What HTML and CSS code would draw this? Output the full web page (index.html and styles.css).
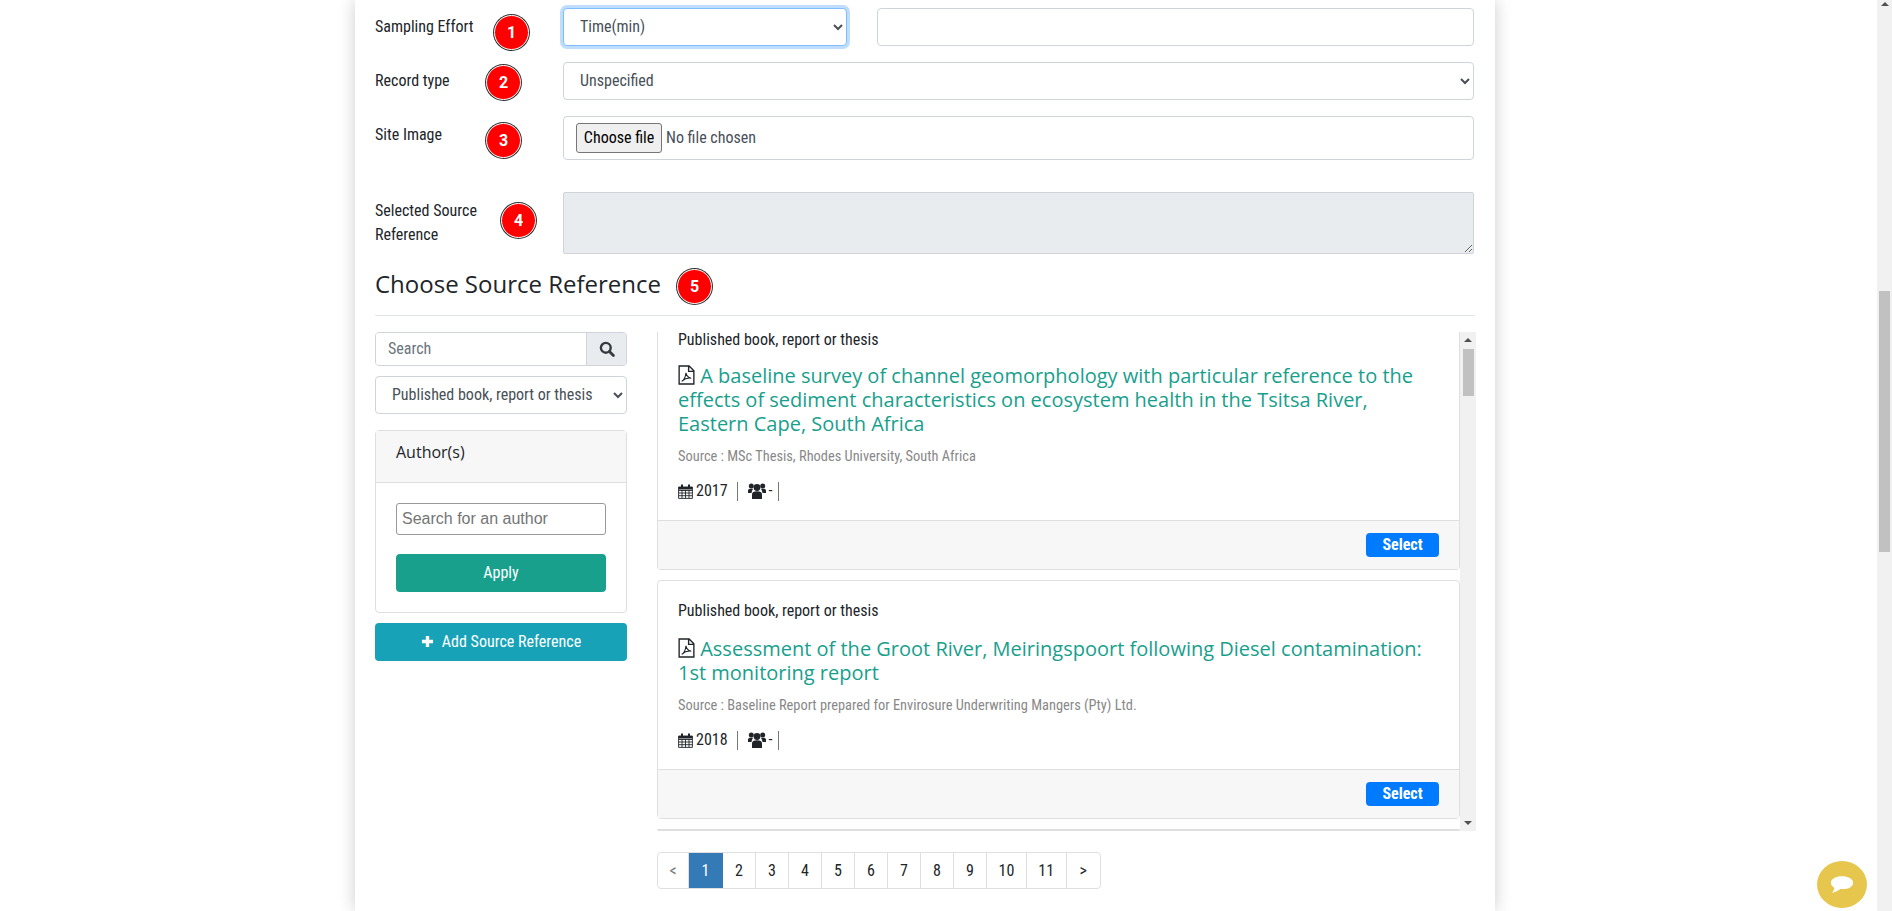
FILE: index.html
```html
<!DOCTYPE html>
<html lang="en">
<head>
  <meta charset="UTF-8">
  <title>Site Visit</title>
  <link rel="stylesheet" href="styles.css">
</head>
<body>
  <div class="page">
    <main class="panel">
      <form class="site-form">
        <div class="form-row">
          <label class="form-label">Sampling Effort</label>
          <div class="two-cols">
            <select class="form-control select-focus"><option>Time(min)</option></select>
            <input class="form-control" type="text">
          </div>
          <span class="badge badge-1">1</span>
        </div>
        <div class="form-row">
          <label class="form-label">Record type</label>
          <select class="form-control"><option>Unspecified</option></select>
          <span class="badge badge-2">2</span>
        </div>
        <div class="form-row row-file">
          <label class="form-label">Site Image</label>
          <div class="form-control file-control">
            <button class="file-btn" type="button">Choose file</button>
            <span>No file chosen</span>
          </div>
          <span class="badge badge-3">3</span>
        </div>
        <div class="form-row">
          <label class="form-label">Selected Source Reference</label>
          <textarea class="form-control source-area" disabled></textarea>
          <span class="badge badge-4">4</span>
        </div>
      </form>

      <div class="section-head">
        <h3>Choose Source Reference</h3>
        <span class="badge badge-5">5</span>
      </div>

      <div class="chooser">
        <aside class="filters">
          <div class="search-group">
            <input type="text" placeholder="Search">
            <button type="button" aria-label="Search">
              <svg viewBox="0 0 16 16" width="16" height="16"><circle cx="6.800" cy="6.800" r="4.900" fill="none" stroke="#343a40" stroke-width="2.400"/><path d="M10.400 10.400 14.400 14.400" stroke="#343a40" stroke-width="2.800" stroke-linecap="round"/></svg>
            </button>
          </div>
          <select class="form-control type-select"><option>Published book, report or thesis</option></select>
          <div class="author-card">
            <div class="author-head">Author(s)</div>
            <div class="author-body">
              <input class="author-input" type="text" placeholder="Search for an author">
              <button class="btn-apply" type="button">Apply</button>
            </div>
          </div>
          <button class="btn-add" type="button">
            <svg viewBox="0 0 14 14" width="13" height="13"><path d="M5.200 1h3.600v4.200H13v3.600H8.800V13H5.200V8.800H1V5.200h4.200z" fill="#fff"/></svg>
            Add Source Reference
          </button>
        </aside>

        <section class="results">
          <div class="ref-list">
            <div class="ref-cards">
              <article class="ref-card first-card">
                <div class="ref-body">
                  <div class="ref-type">Published book, report or thesis</div>
                  <a class="ref-title">
                    <svg class="pdf-icon" viewBox="0 0 16 19" width="17" height="20"><path d="M1 1h9.500L15 5.500V18H1z M10 1v5h5" fill="none" stroke="#212529" stroke-width="1.300"/><path d="M3.500 15.500c2-1 3.500-4 4-8 .5 3 2 4.500 5 5-3-.3-6.500.7-9 3z" fill="none" stroke="#212529" stroke-width="1"/></svg>
                    A baseline survey of channel geomorphology with particular reference to the effects of sediment characteristics on ecosystem health in the Tsitsa River, Eastern Cape, South Africa
                  </a>
                  <div class="ref-source">Source : MSc Thesis, Rhodes University, South Africa</div>
                  <div class="ref-meta">
                    <svg viewBox="0 0 15 15" width="15" height="15"><path d="M.6 3h13.800v11.400H.6z M.6 6.500h13.800 M.6 9h13.800 M.6 11.700h13.800 M4 6v8.400 M7.500 6v8.400 M11 6v8.400" fill="none" stroke="#212529" stroke-width=".9"/><path d="M3 .6h2v3.400H3zM10 .6h2v3.400h-2zM.6 3h13.800v2.500H.6z" fill="#212529"/></svg>
                    <span class="meta-year">2017</span>
                    <i class="meta-sep"></i>
                    <svg class="users-icon" viewBox="0 0 18 16" width="18" height="16"><circle cx="9" cy="4.500" r="3.400" fill="#212529"/><circle cx="3.300" cy="3" r="2.500" fill="#212529"/><circle cx="14.700" cy="3" r="2.500" fill="#212529"/><path d="M4 16v-4.500c0-2.500 1.800-3.300 5-3.300s5 .8 5 3.300V16z M0 10V7.700C0 6.300 1 5.800 3.300 5.800c.7 0 1.200.1 1.700.3C4.200 7 3.700 8.300 3.500 10z M18 10V7.700C18 6.300 17 5.800 14.700 5.800c-.7 0-1.200.1-1.700.3.800.9 1.300 2.200 1.500 3.900z" fill="#212529"/></svg>
                    <span class="meta-dash">-</span>
                    <i class="meta-sep"></i>
                  </div>
                </div>
                <div class="ref-foot"><button class="btn-select" type="button">Select</button></div>
              </article>

              <article class="ref-card">
                <div class="ref-body">
                  <div class="ref-type">Published book, report or thesis</div>
                  <a class="ref-title">
                    <svg class="pdf-icon" viewBox="0 0 16 19" width="17" height="20"><path d="M1 1h9.500L15 5.500V18H1z M10 1v5h5" fill="none" stroke="#212529" stroke-width="1.300"/><path d="M3.500 15.500c2-1 3.500-4 4-8 .5 3 2 4.500 5 5-3-.3-6.500.7-9 3z" fill="none" stroke="#212529" stroke-width="1"/></svg>
                    Assessment of the Groot River, Meiringspoort following Diesel contamination: 1st monitoring report
                  </a>
                  <div class="ref-source">Source : Baseline Report prepared for Envirosure Underwriting Mangers (Pty) Ltd.</div>
                  <div class="ref-meta">
                    <svg viewBox="0 0 15 15" width="15" height="15"><path d="M.6 3h13.800v11.400H.6z M.6 6.500h13.800 M.6 9h13.800 M.6 11.700h13.800 M4 6v8.400 M7.500 6v8.400 M11 6v8.400" fill="none" stroke="#212529" stroke-width=".9"/><path d="M3 .6h2v3.400H3zM10 .6h2v3.400h-2zM.6 3h13.800v2.500H.6z" fill="#212529"/></svg>
                    <span class="meta-year">2018</span>
                    <i class="meta-sep"></i>
                    <svg class="users-icon" viewBox="0 0 18 16" width="18" height="16"><circle cx="9" cy="4.500" r="3.400" fill="#212529"/><circle cx="3.300" cy="3" r="2.500" fill="#212529"/><circle cx="14.700" cy="3" r="2.500" fill="#212529"/><path d="M4 16v-4.500c0-2.500 1.800-3.300 5-3.300s5 .8 5 3.300V16z M0 10V7.700C0 6.300 1 5.800 3.300 5.800c.7 0 1.200.1 1.700.3C4.200 7 3.700 8.300 3.500 10z M18 10V7.700C18 6.300 17 5.800 14.700 5.800c-.7 0-1.200.1-1.700.3.800.9 1.300 2.200 1.500 3.900z" fill="#212529"/></svg>
                    <span class="meta-dash">-</span>
                    <i class="meta-sep"></i>
                  </div>
                </div>
                <div class="ref-foot"><button class="btn-select" type="button">Select</button></div>
              </article>

              <article class="ref-card"></article>
            </div>
            <div class="list-scroll">
              <span class="arrow-up"></span>
              <span class="list-thumb"></span>
              <span class="arrow-down"></span>
            </div>
          </div>

          <ul class="pager">
            <li class="pager-off">&lt;</li>
            <li class="pager-on">1</li>
            <li>2</li>
            <li>3</li>
            <li>4</li>
            <li>5</li>
            <li>6</li>
            <li>7</li>
            <li>8</li>
            <li>9</li>
            <li>10</li>
            <li>11</li>
            <li>&gt;</li>
          </ul>
        </section>
      </div>
    </main>

    <div class="page-scroll">
      <span class="arrow-up"></span>
      <span class="page-thumb"></span>
    </div>
  </div>

  <button class="chat-bubble" type="button" aria-label="Chat">
    <svg viewBox="0 0 26 20" width="24" height="19"><path d="M13 1c6.500 0 12 2.800 12 7s-5 7-11 7c-1 0-2 0-3-.2C9 16.500 6 18.500 2 19c1.500-1.500 2.500-3 2.700-5.500C2.500 12.200 1 10.300 1 8c0-4.200 5.500-7 12-7z" fill="#fff"/></svg>
  </button>
</body>
</html>
```

FILE: styles.css
```css
* {
  box-sizing: border-box;
}
html, body {
  height: 100%;
  margin: 0;
  overflow: hidden;
}
body {
  font-family: 'Roboto Condensed', 'Liberation Sans Narrow', Roboto, sans-serif;
  font-stretch: 75%;
  font-size: 16px;
  line-height: 24px;
  color: #212529;
  background: #fff;
}
button, input, select, textarea {
  font-family: inherit;
  font-stretch: inherit;
}
.page {
  display: flex;
  height: 911px;
}
.panel {
  width: 1140px;
  height: 911px;
  margin-left: 355px;
  margin-right: auto;
  padding: 8px 20px 0;
  background: #fff;
  box-shadow: 0 0 16px rgba(0, 0, 0, 0.2);
  overflow: hidden;
}

/* top form */
.form-row {
  position: relative;
  display: grid;
  grid-template-columns: 188px 1fr;
  margin-bottom: 16px;
  margin-right: 1px;
}
.row-file {
  margin-bottom: 32px;
}
.form-label {
  padding-top: 7px;
  width: 120px;
}
.two-cols {
  display: grid;
  grid-template-columns: 284px 1fr;
  gap: 30px;
}
.form-control {
  display: block;
  width: 100%;
  height: 38px;
  padding: 5px 12px 7px;
  font-size: 16px;
  color: #495057;
  background: #fff;
  border: 1px solid #ced4da;
  border-radius: 4px;
}
.select-focus {
  border-color: #80bdff;
  box-shadow: 0 0 0 3px rgba(0, 123, 255, 0.25);
}
.file-control {
  display: flex;
  align-items: center;
  gap: 4px;
  height: 44px;
  padding: 6px 12px;
}
.file-btn {
  width: 86px;
  height: 30px;
  padding: 0 0 2px;
  font-size: 16px;
  color: #000;
  background: #efefef;
  border: 1px solid #767676;
  border-radius: 3px;
}
.source-area {
  height: 62px;
  background: #e9ecef;
  border-radius: 2px;
}

/* numbered notes */
.badge {
  position: absolute;
  width: 35px;
  height: 35px;
  display: flex;
  align-items: center;
  justify-content: center;
  font-family: Roboto, sans-serif;
  font-stretch: normal;
  font-size: 16px;
  font-weight: 700;
  color: #fff;
  background: #f00;
  border: 1px solid #fff;
  border-radius: 50%;
  box-shadow: 0 0 0 1px #333;
}
.badge-1 { left: 119px; top: 7px; }
.badge-2 { left: 111px; top: 3px; }
.badge-3 { left: 111px; top: 7px; }
.badge-4 { left: 126px; top: 11px; }
.badge-5 { left: 302px; top: -1px; }

.section-head {
  position: relative;
  height: 46px;
  margin-top: 16px;
  border-bottom: 1px solid #e2e5e8;
}
.section-head h3 {
  margin: 0;
  font-family: 'Open Sans', sans-serif;
  font-stretch: normal;
  font-size: 24px;
  font-weight: 400;
  line-height: 28px;
}

/* chooser */
.chooser {
  display: grid;
  grid-template-columns: 252px 1fr;
  gap: 30px;
  margin-top: 16px;
}
.search-group {
  display: flex;
  height: 34px;
  border: 1px solid #ced4da;
  border-radius: 4px;
  overflow: hidden;
}
.search-group input {
  flex: 1;
  min-width: 0;
  border: 0;
  padding: 0 12px 2px;
  font-size: 16px;
}
.search-group input::placeholder {
  color: #6c757d;
}
.search-group button {
  width: 40px;
  padding: 0;
  border: 0;
  border-left: 1px solid #ced4da;
  background: #e9ecef;
  display: flex;
  align-items: center;
  justify-content: center;
}
.type-select {
  margin-top: 10px;
}
.author-card {
  margin-top: 16px;
  border: 1px solid #dfdfdf;
  border-radius: 4px;
  height: 183px;
}
.author-head {
  height: 52px;
  padding: 9px 20px;
  font-family: 'Open Sans', sans-serif;
  font-stretch: normal;
  font-size: 16px;
  background: #f7f7f7;
  border-bottom: 1px solid #dfdfdf;
}
.author-body {
  padding: 20px;
}
.author-input {
  display: block;
  width: 100%;
  height: 32px;
  padding: 1px 5px;
  font-family: 'Liberation Sans', sans-serif;
  font-stretch: normal;
  font-size: 16px;
  border: 1px solid #999;
  border-radius: 3px;
}
.btn-apply {
  display: block;
  width: 100%;
  height: 38px;
  margin-top: 19px;
  padding: 0 0 2px;
  font-size: 16px;
  color: #fff;
  background: #18a08d;
  border: 0;
  border-radius: 4px;
}
.btn-add {
  display: flex;
  align-items: center;
  justify-content: center;
  gap: 8px;
  width: 100%;
  height: 38px;
  margin-top: 10px;
  padding: 0 0 2px;
  font-size: 16px;
  color: #fff;
  background: #17a2b8;
  border: 0;
  border-radius: 4px;
}

/* results list */
.results {
  min-width: 0;
  margin-right: -1px;
}
.ref-list {
  display: flex;
  height: 499px;
}
.ref-cards {
  flex: 1;
  min-width: 0;
  overflow: hidden;
}
.ref-card {
  border: 1px solid #dfdfdf;
  border-radius: 4px;
  margin-bottom: 10px;
}
.ref-body {
  padding: 18px 20px 17px;
}
.ref-type {
  font-size: 16px;
  margin-bottom: 14px;
}
/* the list is scrolled, so the first card starts under its top edge */
.first-card {
  border-top: 0;
  border-top-left-radius: 0;
  border-top-right-radius: 0;
}
.first-card .ref-body {
  padding-top: 0;
}
.first-card .ref-type {
  line-height: 16px;
  margin-bottom: 16px;
}
.ref-title {
  display: block;
  font-family: 'Open Sans', sans-serif;
  font-stretch: normal;
  font-size: 20px;
  line-height: 24px;
  color: #18a08d;
}
.pdf-icon {
  vertical-align: -2px;
}
.ref-source {
  margin-top: 9px;
  font-size: 14.4px;
  color: #888;
}
.ref-meta {
  display: flex;
  align-items: center;
  gap: 4px;
  margin-top: 10px;
  height: 24px;
  font-size: 16px;
}
.meta-year {
  margin: 0 1px 0 -1px;
}
.meta-sep {
  width: 1px;
  height: 19px;
  background: #777;
  margin-left: 4px;
  margin-right: 6px;
}
.meta-dash {
  margin: 0 -3px 0 -1px;
}
.users-icon {
  flex: none;
}
.ref-foot {
  display: flex;
  justify-content: flex-end;
  align-items: center;
  height: 49px;
  padding-right: 20px;
  background: #f7f7f7;
  border-top: 1px solid #dfdfdf;
}
.btn-select {
  width: 73px;
  height: 24px;
  padding: 0 0 2px;
  font-size: 16px;
  font-weight: 700;
  color: #fff;
  background: #007bff;
  border: 0;
  border-radius: 4px;
}
.list-scroll {
  position: relative;
  width: 16px;
  flex: none;
  background: #f1f1f1;
}
.list-thumb {
  position: absolute;
  left: 3px;
  top: 17px;
  width: 11px;
  height: 47px;
  background: #c1c1c1;
}
.arrow-up, .arrow-down {
  position: absolute;
  left: 50%;
  margin-left: -4px;
  width: 0;
  height: 0;
  border-left: 4px solid transparent;
  border-right: 4px solid transparent;
}
.arrow-up {
  top: 6px;
  border-bottom: 4px solid #505050;
}
.arrow-down {
  bottom: 6px;
  border-top: 4px solid #505050;
}

/* pagination */
.pager {
  display: inline-flex;
  list-style: none;
  margin: 21px 0 0;
  padding: 0;
  height: 37px;
  border: 1px solid #dfdfdf;
  border-radius: 4px;
  font-size: 16px;
}
.pager li {
  display: flex;
  align-items: center;
  justify-content: center;
  min-width: 33px;
  padding: 0 11.5px;
  border-right: 1px solid #dfdfdf;
}
.pager li:last-child {
  border-right: 0;
}
.pager .pager-off {
  color: #777;
  min-width: 31px;
  padding: 0 10px;
}
.pager .pager-on {
  color: #fff;
  min-width: 34px;
  background: #337ab7;
  border-right-color: #337ab7;
}

/* page scrollbar */
.page-scroll {
  position: relative;
  flex: none;
  width: 15px;
  height: 911px;
  background: #f1f1f1;
}
.page-thumb {
  position: absolute;
  left: 2px;
  top: 291px;
  width: 11px;
  height: 261px;
  background: #c1c1c1;
}
.page-scroll .arrow-up {
  top: 2px;
}

.chat-bubble {
  position: fixed;
  right: 25px;
  bottom: 3px;
  width: 50px;
  height: 47px;
  display: flex;
  align-items: center;
  justify-content: center;
  padding: 0;
  background: #e6c64c;
  border: 0;
  border-radius: 50%;
}
```
